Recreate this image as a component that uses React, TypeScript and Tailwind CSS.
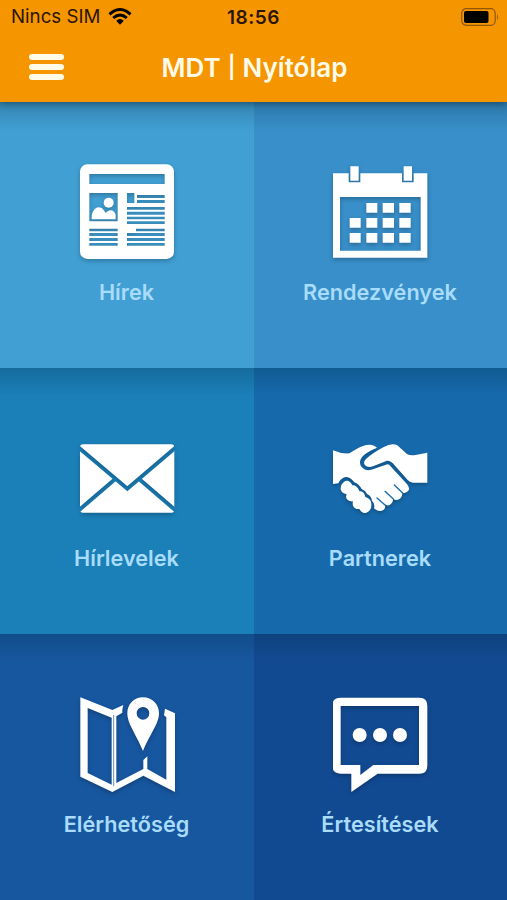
import React from "react";

type Tile = {
  label: string;
  color: string;
  icon: React.ReactNode;
};

const NewsIcon = () => (
  <svg viewBox="57 42 288 288" className="h-24 w-24" fill="white">
    <mask id="news">
      <rect x="60" y="43" width="282" height="284" rx="22" fill="white" />
      <g fill="black">
        <path d="M88 72h226v30H88zM88 129h85v85H88zM201 129h22v30h-22z" />
        <path d="M231 135h83v9h-83zM231 150h83v9h-83zM201 171h113v8H201zM201 185h113v9H201zM201 200h113v8H201zM201 214h113v8H201z" />
        <path d="M228 236h86v8h-86zM201 249h113v9H201zM201 264h113v9H201zM201 279h113v8H201z" />
        <path d="M88 236h85v8H88zM88 249h85v9H88zM88 264h85v9H88zM88 279h85v8H88z" />
      </g>
      <circle cx="146" cy="158" r="15" fill="white" />
      <path d="M95 208v-12c4-16 12-24 21-24 10 0 16 9 21 17 4-4 10-9 16-8 8 1 11 6 14 13v14z" fill="white" />
    </mask>
    <rect x="57" y="42" width="288" height="288" mask="url(#news)" />
  </svg>
);

const CalendarIcon = () => (
  <svg viewBox="114 42 288 288" className="h-24 w-24" fill="white">
    <path
      fillRule="evenodd"
      d="M114 70h47v27h35V70h125v27h35V70h41v253H114zM135 141v161h242V141z"
    />
    <path d="M166 49h25v43h-25zM326 49h25v43h-25z" />
    <path d="M214 159h33v29h-33zM263 159h34v29h-34zM313 159h34v29h-34z" />
    <path d="M164 204h33v29h-33zM214 204h33v29h-33zM263 204h34v29h-34zM313 204h34v29h-34z" />
    <path d="M164 249h33v29h-33zM214 249h33v29h-33zM263 249h34v29h-34zM313 249h34v29h-34z" />
  </svg>
);

const EnvelopeIcon = () => (
  <svg viewBox="57 0 288 288" className="h-24 w-24" fill="white">
    <mask id="envelope">
      <rect x="60" y="43" width="283" height="205" rx="9" fill="white" />
      <g fill="none" stroke="black" strokeWidth="12">
        <path d="M54 51l148 125L349 51" />
        <path d="M54 243l111-95M349 243l-111-95" />
      </g>
    </mask>
    <rect x="57" y="40" width="288" height="212" mask="url(#envelope)" />
  </svg>
);

const HandshakeIcon = () => (
  <svg viewBox="54 0 288 288" className="h-24 w-24" fill="white">
    <path d="M53 60Q80 72 103 70C118 62 134 47 160 44Q176 43 186 53C168 60 151 70 142 80C132 92 133 106 144 115C153 123 166 121 178 116L217 103Q223 103 228 110L275 161Q285 172 281 181Q274 192 262 188Q262 202 252 208Q243 213 234 206Q235 219 224 225Q217 228 209 223Q214 234 205 240Q195 247 183 239L177 235Q181 222 171 212Q169 198 157 193Q151 181 140 177Q132 162 118 157Q106 141 92 141Q78 143 70 160L53 162Z" />
    <path d="M337 68L337 158L293 158Q284 157 278 150L240 107Q229 92 216 92L176 108Q159 115 150 106Q143 97 153 87Q173 69 205 52Q230 37 247 46L276 72Q285 78 302 75Z" />
    <path d="M91 153Q104 149 112 166Q126 165 133 183Q148 183 151 201Q168 206 169 221Q171 241 154 248Q142 252 133 237Q120 239 114 227Q112 221 114 214Q101 215 96 208Q91 201 95 193Q79 190 77 178Q76 161 91 153Z" />
    <g fill="none" stroke="#166aac" strokeWidth="4" strokeLinecap="round">
      <path d="M186 204l24 21M210 184l25 23M238 165l25 24" />
    </g>
  </svg>
);

const MapIcon = () => (
  <svg viewBox="72 33 288 288" className="h-24 w-24" fill="white">
    <path
      fillRule="evenodd"
      d="M76 37L172 75L205 60Q201 73 202 83L184 94V294L265 252V225L277 214V252L334 284V97L327 91L330 71L360 85V321L265 272L172 321L76 275ZM98 69V264L170 299V98Z"
    />
    <path d="M176 90V303" stroke="#1757a0" strokeWidth="2" />
    <path
      fillRule="evenodd"
      d="M264 37C236 37 217 58 217 85C217 115 240 142 264 198C288 142 312 115 312 85C312 58 292 37 264 37ZM264 66a19 19 0 1 1 0 38a19 19 0 1 1 0-38Z"
    />
  </svg>
);

const MessageIcon = () => (
  <svg viewBox="69 33 288 288" className="h-24 w-24" fill="white">
    <path
      fillRule="evenodd"
      d="M92 38H328Q352 38 352 62V242Q352 266 328 266H203L124 321V266H92Q67 266 67 242V62Q67 38 92 38ZM92 63V240H151V270L190 240H327V63Z"
    />
    <circle cx="149" cy="150" r="21" />
    <circle cx="210" cy="150" r="21" />
    <circle cx="270" cy="150" r="21" />
  </svg>
);

const tiles: Tile[] = [
  { label: "Hírek", color: "bg-[#419fd3]", icon: <NewsIcon /> },
  { label: "Rendezvények", color: "bg-[#388fc9]", icon: <CalendarIcon /> },
  { label: "Hírlevelek", color: "bg-[#1b7fb8]", icon: <EnvelopeIcon /> },
  { label: "Partnerek", color: "bg-[#166aac]", icon: <HandshakeIcon /> },
  { label: "Elérhetőség", color: "bg-[#1757a0]", icon: <MapIcon /> },
  { label: "Értesítések", color: "bg-[#124a92]", icon: <MessageIcon /> },
];

const StatusBar = () => (
  <div className="grid h-[34px] grid-cols-[1fr_auto_1fr] items-center pr-2 pl-[11px] text-[#2b1604]">
    <div className="flex items-center gap-2">
      <span className="text-[18.7px] whitespace-nowrap">Nincs SIM</span>
      <svg viewBox="0 0 24 17" className="h-[17px] w-6" fill="none" stroke="black" strokeWidth="3">
        <path d="M1.5 6.3Q12-3.2 22.5 6.3M5.2 10Q12 4 18.8 10" />
        <path d="M8.2 12.7Q12 9.4 15.8 12.7L12 16.7Z" fill="black" stroke="none" />
      </svg>
    </div>
    <span className="pt-0.5 pr-[3px] text-[19px] font-semibold tracking-[0.5px]">18:56</span>
    <svg viewBox="0 0 38 18" className="h-[18px] w-[38px] justify-self-end">
      <rect x=".7" y=".7" width="33.5" height="16.6" rx="4.5" fill="none" stroke="#90590a" strokeWidth="1.2" />
      <rect x="3" y="3" width="24.5" height="12" rx="2" fill="black" />
      <path d="M36 6q2 3 0 6z" fill="#90590a" />
    </svg>
  </div>
);

const App = () => {
  return (
    <div className="flex h-[900px] w-[507px] flex-col overflow-hidden font-['Inter',sans-serif]">
      <header className="relative z-10 h-[102px] shrink-0 bg-[#f59500] shadow-[0_1px_8px_rgba(0,0,0,0.45)]">
        <StatusBar />
        <div className="grid h-[66px] grid-cols-[1fr_auto_1fr] items-center">
          <button className="ml-[29px] flex w-[35px] flex-col gap-1" aria-label="Menü">
            <span className="h-1.5 rounded-full bg-[#fffbe9]" />
            <span className="h-1.5 rounded-full bg-[#fffbe9]" />
            <span className="h-1.5 rounded-full bg-[#fffbe9]" />
          </button>
          <h1 className="flex gap-[7px] pl-[2px] text-[26px] font-semibold text-[#fffbe9]">
            <span>MDT</span>
            <span className="pt-[3px] text-[22px] leading-8">|</span>
            <span>Nyítólap</span>
          </h1>
        </div>
      </header>

      <main className="grid flex-1 grid-cols-[254px_253px] grid-rows-3">
        {tiles.map((tile) => (
          <button
            key={tile.label}
            className={`flex flex-col items-center bg-linear-to-b from-[#00283c]/22 to-transparent to-[28px] pt-[62px] ${tile.color}`}
          >
            <span className="drop-shadow-[0_2px_2px_rgba(0,0,0,0.25)]">{tile.icon}</span>
            <span className="mt-4 pr-px text-[21.7px] leading-8 font-semibold text-[#a8dcfa]">{tile.label}</span>
          </button>
        ))}
      </main>
    </div>
  );
};

export default App;
